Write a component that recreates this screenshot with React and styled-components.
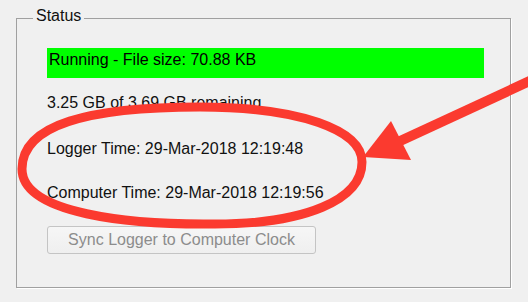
import styled, { createGlobalStyle } from "styled-components";

const GlobalStyle = createGlobalStyle`
  html, body {
    margin: 0;
    padding: 0;
    background: #f0f0f0;
  }
  body {
    width: 528px;
    height: 302px;
    overflow: hidden;
    font-family: "Liberation Sans", Arial, sans-serif;
    font-size: 16px;
    color: #111;
  }
`;

const Page = styled.div`
  position: relative;
  box-sizing: border-box;
  width: 528px;
  height: 302px;
  padding: 8px 0 0 16px;
`;

const GroupBox = styled.fieldset`
  box-sizing: border-box;
  width: 495px;
  height: 280px;
  margin: 0;
  padding: 20px 26px 0 30px;
  border: 1px solid #a0a0a0;
  box-shadow: 1px 1px 0 #ffffff;
  display: flex;
  flex-direction: column;
  align-items: stretch;
`;

const Legend = styled.legend`
  margin-left: -14px;
  padding: 0 3px 4px;
  line-height: 16px;
  color: #111;
`;

const StatusBar = styled.div`
  box-sizing: border-box;
  height: 30px;
  padding: 3px 2px;
  line-height: 18px;
  background: ${p => p.$color};
  color: #000;
`;

const InfoLine = styled.div`
  line-height: 18px;
  margin-top: ${p => p.$gap}px;
`;

const SyncButton = styled.button`
  box-sizing: border-box;
  align-self: flex-start;
  width: 269px;
  height: 28px;
  margin-top: 24px;
  padding: 0 0 1px;
  border: 1px solid #c4c4c4;
  border-radius: 3px;
  background: linear-gradient(#f6f6f6, #efefef);
  font-family: "Liberation Sans", Arial, sans-serif;
  font-size: 16px;
  line-height: 18px;
  color: #8c8c8c;
`;

const Annotation = styled.svg`
  position: absolute;
  left: 0;
  top: 0;
  pointer-events: none;
`;

const RED = "#fb3a2f";

// hand-drawn callout over the two clock lines
function Markup() {
  return (
    <Annotation width="528" height="302" viewBox="0 0 528 302">
      <path
        d="M22 169 C22 124 90 107 200 107 C300 107 362 130 362 162 C362 200 305 224 215 224 C130 225 22 214 22 169 Z"
        fill="none"
        stroke={RED}
        strokeWidth="9"
      />
      <line x1="532" y1="80" x2="398" y2="142" stroke={RED} strokeWidth="10" />
      <polygon points="363,157 391,121 411,160" fill={RED} />
    </Annotation>
  );
}

export default function App() {
  return (
    <Page>
      <GlobalStyle />
      <GroupBox>
        <Legend>Status</Legend>
        <StatusBar $color="#00ff00">Running - File size: 70.88 KB</StatusBar>
        <InfoLine $gap={16}>3.25 GB of 3.69 GB remaining</InfoLine>
        <InfoLine $gap={28}>Logger Time: 29-Mar-2018 12:19:48</InfoLine>
        <InfoLine $gap={26}>Computer Time: 29-Mar-2018 12:19:56</InfoLine>
        <SyncButton disabled>Sync Logger to Computer Clock</SyncButton>
      </GroupBox>
      <Markup />
    </Page>
  );
}
